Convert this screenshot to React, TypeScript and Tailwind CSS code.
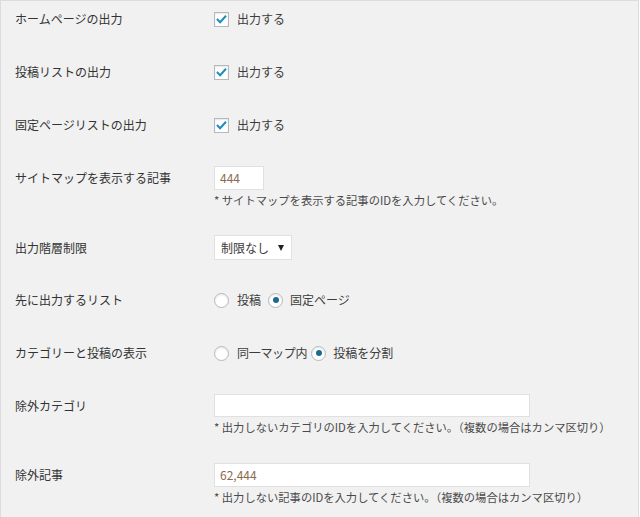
import React from "react";

const font = { fontFamily: '"Noto Sans CJK JP", "Noto Sans", sans-serif' };

function Check() {
  return (
    <span className="flex h-[15px] w-[15px] items-center justify-center border border-[#b4b9be] bg-white shadow-[inset_0_1px_2px_rgba(0,0,0,0.1)]">
      <svg width="11" height="11" viewBox="0 0 20 20">
        <path d="M3 10.5 L7.5 15 L17 4.5" fill="none" stroke="#1e8cbe" strokeWidth="3.6" strokeLinecap="square" strokeLinejoin="miter" />
      </svg>
    </span>
  );
}

function Radio({ on }: { on?: boolean }) {
  return (
    <span className="flex h-[15px] w-[15px] items-center justify-center rounded-full border border-[#b4b9be] bg-white shadow-[inset_0_1px_2px_rgba(0,0,0,0.1)]">
      {on && <span className="h-[6px] w-[6px] rounded-full bg-[#1e6a8d]" />}
    </span>
  );
}

function Label({ text, h }: { text: string; h: number }) {
  return (
    <div className="flex w-[213px] items-center pl-[14px] text-[12px] text-[#333]" style={{ height: h }}>
      {text}
    </div>
  );
}

function CheckRow({ label }: { label: string }) {
  return (
    <div className="flex h-[20px]">
      <Label text={label} h={20} />
      <div className="flex items-center gap-[8px] text-[12px] text-[#3c3c3c]">
        <Check />
        <span>出力する</span>
      </div>
    </div>
  );
}

function Desc({ text }: { text: string }) {
  return <div className="mt-[1px] h-[19px] text-[11.3px] leading-[19px] text-[#4a4a4a]">{text}</div>;
}

export default function App() {
  return (
    <div className="h-[517px] w-[639px] border-l border-r border-t border-[#dcdcdc] bg-[#f1f1f1] pt-[8px]" style={font}>
      <div className="flex flex-col">
        <div className="mb-[33px]"><CheckRow label="ホームページの出力" /></div>
        <div className="mb-[33px]"><CheckRow label="投稿リストの出力" /></div>
        <div className="mb-[31px]"><CheckRow label="固定ページリストの出力" /></div>

        <div className="mb-[25px] flex">
          <Label text="サイトマップを表示する記事" h={24} />
          <div>
            <div className="flex h-[24px] w-[50px] items-center border border-[#e0e0e0] bg-white pl-[5px] text-[12px] text-[#8a6a4e]">444</div>
            <Desc text="* サイトマップを表示する記事のIDを入力してください。" />
          </div>
        </div>

        <div className="mb-[30px] flex">
          <Label text="出力階層制限" h={25} />
          <div className="flex h-[25px] w-[78px] items-center justify-between border border-[#e0e0e0] bg-white pl-[6px] pr-[7px] text-[12px] text-[#3c3c3c]">
            <span>制限なし</span>
            <span className="h-0 w-0 border-l-[3.5px] border-r-[3.5px] border-t-[6px] border-l-transparent border-r-transparent border-t-[#222]" />
          </div>
        </div>

        <div className="mb-[33px] flex h-[20px]">
          <Label text="先に出力するリスト" h={20} />
          <div className="flex items-center text-[12px] text-[#3c3c3c]">
            <Radio />
            <span className="ml-[8px] mr-[7px]">投稿</span>
            <Radio on />
            <span className="ml-[7px]">固定ページ</span>
          </div>
        </div>

        <div className="mb-[31px] flex h-[20px]">
          <Label text="カテゴリーと投稿の表示" h={20} />
          <div className="flex items-center text-[12px] text-[#3c3c3c]">
            <Radio />
            <span className="ml-[8px] mr-[4px] tracking-[-0.3px]">同一マップ内</span>
            <Radio on />
            <span className="ml-[7px]">投稿を分割</span>
          </div>
        </div>

        <div className="mb-[26px] flex">
          <Label text="除外カテゴリ" h={23} />
          <div>
            <div className="h-[23px] w-[316px] border border-[#e0e0e0] bg-white" />
            <Desc text="* 出力しないカテゴリのIDを入力してください。（複数の場合はカンマ区切り）" />
          </div>
        </div>

        <div className="flex">
          <Label text="除外記事" h={24} />
          <div>
            <div className="flex h-[24px] w-[316px] items-center border border-[#e0e0e0] bg-white pl-[5px] text-[12px] text-[#8a6a4e]">62,444</div>
            <Desc text="* 出力しない記事のIDを入力してください。（複数の場合はカンマ区切り）" />
          </div>
        </div>
      </div>
    </div>
  );
}
